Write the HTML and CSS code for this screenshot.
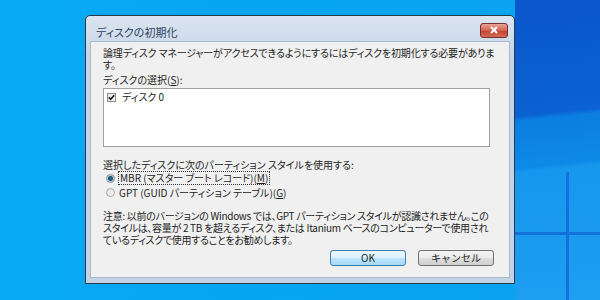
FILE: index.html
```html
<!DOCTYPE html>
<html lang="ja">
<head>
    <meta charset="UTF-8">
    <title>ディスクの初期化</title>
    <link rel="stylesheet" href="styles.css">
</head>
<body>

    <!-- Initialize disk dialog -->
    <div class="dialog">
        <div class="titlebar">
            <span class="title">ディスクの初期化</span>
            <button class="close-btn">
                <svg width="10" height="8" viewBox="0 0 10 8"><path d="M2 1 L8 7 M8 1 L2 7" stroke="#fff" stroke-width="2"/></svg>
            </button>
        </div>

        <div class="client">
            <p class="intro">論理ディスク マネージャーがアクセスできるようにするにはディスクを初期化する必要がありま<br>す。</p>

            <div class="label">ディスクの選択(<u>S</u>):</div>
            <div class="listbox">
                <div class="item">
                    <span class="checkbox">
                        <svg width="7" height="7" viewBox="0 0 7 7"><path d="M0.8 3.4 L2.7 5.3 L6.2 1.2" fill="none" stroke="#1b1b1b" stroke-width="1.6"/></svg>
                    </span>
                    ディスク 0
                </div>
            </div>

            <div class="label group-label">選択したディスクに次のパーティション スタイルを使用する:</div>
            <div class="radio-row">
                <span class="radio checked"></span>
                <span class="focus">MBR (マスター ブート レコード)(<u>M</u>)</span>
            </div>
            <div class="radio-row">
                <span class="radio"></span>
                <span>GPT (GUID パーティション テーブル)(<u>G</u>)</span>
            </div>

            <p class="note">注意: 以前のバージョンの Windows では、GPT パーティション スタイルが認識されません。この<br>スタイルは、容量が 2 TB を超えるディスク、または Itanium ベースのコンピューターで使用され<br>ているディスクで使用することをお勧めします。</p>

            <div class="buttons">
                <button class="btn btn-default">OK</button>
                <button class="btn">キャンセル</button>
            </div>
        </div>
    </div>

</body>
</html>
```

FILE: styles.css
```css
body {
    margin: 0;
    width: 600px;
    height: 300px;
    padding: 15px 0 0 85px;
    box-sizing: border-box;
    overflow: hidden;
    font-family: "Noto Sans CJK JP", "Noto Sans", sans-serif;
    font-feature-settings: "palt";
    font-size: 10px;
    color: #1e1e1e;
    background:
        linear-gradient(#1272d9, #1272d9) 566px 172px / 3px 128px no-repeat,
        linear-gradient(#1272d9, #1272d9) 515px 232px / 85px 3px no-repeat,
        linear-gradient(174deg, #0a56ca 0, #0b62d3 116px, #0b7ee2 121px, #0d8ae7 168px, #1796ee 172px, #1e9ef1 300px) right top / 85px 300px no-repeat,
        linear-gradient(to right, #08a9f3, #09a3ef 515px);
}
.dialog {
    width: 430px;
    height: 269px;
    box-sizing: border-box;
    border: 1px solid #2a3a4c;
    border-radius: 5px 5px 0 0;
    padding: 0 4px 5px 4px;
    background: linear-gradient(#dbe5f1, #c6d5e6 40px, #c3d2e4);
    display: flex;
    flex-direction: column;
}
.titlebar {
    height: 25px;
    display: flex;
    align-items: center;
    justify-content: space-between;
    padding-top: 3px;
    box-sizing: border-box;
}
.title {
    padding-left: 6px;
    font-size: 11px;
    color: #2a4260;
    margin-top: 3px;
}
.close-btn {
    width: 28px;
    height: 15px;
    margin-right: 2px;
    padding: 0;
    border: 1px solid #7a3030;
    border-radius: 3px;
    background: linear-gradient(#e8a493, #d2634f 50%, #c2432f 51%, #d46a52);
    display: flex;
    align-items: center;
    justify-content: center;
}
.client {
    flex: 1;
    background: #f0f0f0;
    border: 1px solid #a9b9cc;
    padding: 5px 15px 0 12px;
    display: flex;
    flex-direction: column;
}
.intro, .note {
    margin: 0;
    line-height: 12px;
    white-space: nowrap;
}
.intro {
    letter-spacing: -0.15px;
}
.note {
    margin-top: 11px;
    letter-spacing: -0.3px;
}
.label {
    margin-top: 3px;
    line-height: 12px;
}
.listbox {
    margin-top: 2px;
    width: 387px;
    height: 59px;
    box-sizing: border-box;
    border: 1px solid #a0a0a0;
    background: #fff;
    padding: 2px 2px;
}
.item {
    display: flex;
    align-items: center;
    gap: 6px;
    line-height: 12px;
}
.checkbox {
    width: 9px;
    height: 9px;
    box-sizing: border-box;
    border: 1px solid #8a8a8a;
    background: linear-gradient(135deg, #e6e6e6, #fdfdfd);
    display: flex;
    align-items: center;
    justify-content: center;
    margin-left: 1px;
}
.group-label {
    margin-top: 12px;
}
.radio-row {
    height: 14px;
    display: flex;
    align-items: center;
    padding-left: 3px;
}
.radio-row:first-of-type {
    margin-top: 1px;
}
.radio {
    width: 9px;
    height: 9px;
    box-sizing: border-box;
    border-radius: 50%;
    border: 1px solid #a8a8a8;
    background: linear-gradient(135deg, #e0e0e0, #fafafa);
    margin-right: 4px;
}
.radio.checked {
    border-color: #7d8d9c;
    background: radial-gradient(circle, #2a6f96 0, #1b4f72 2px, #c9d2da 3px, #f0f0f0 5px);
}
.focus {
    outline: 1px dotted #333;
    padding: 0 1px;
    line-height: 12px;
}
.buttons {
    margin-top: 4px;
    display: flex;
    justify-content: flex-end;
    gap: 12px;
}
.btn {
    width: 76px;
    height: 16px;
    padding: 0;
    font-family: inherit;
    font-size: 10px;
    color: #1e1e1e;
    border: 1px solid #707070;
    border-radius: 3px;
    background: linear-gradient(#f2f2f2, #ebebeb 50%, #dddddd 51%, #cfcfcf);
    line-height: 14px;
}
.btn-default {
    border-color: #3c7fb1;
    background: linear-gradient(#eaf6fd, #d9f0fc 50%, #bee6fd 51%, #a7d9f5);
}
```
